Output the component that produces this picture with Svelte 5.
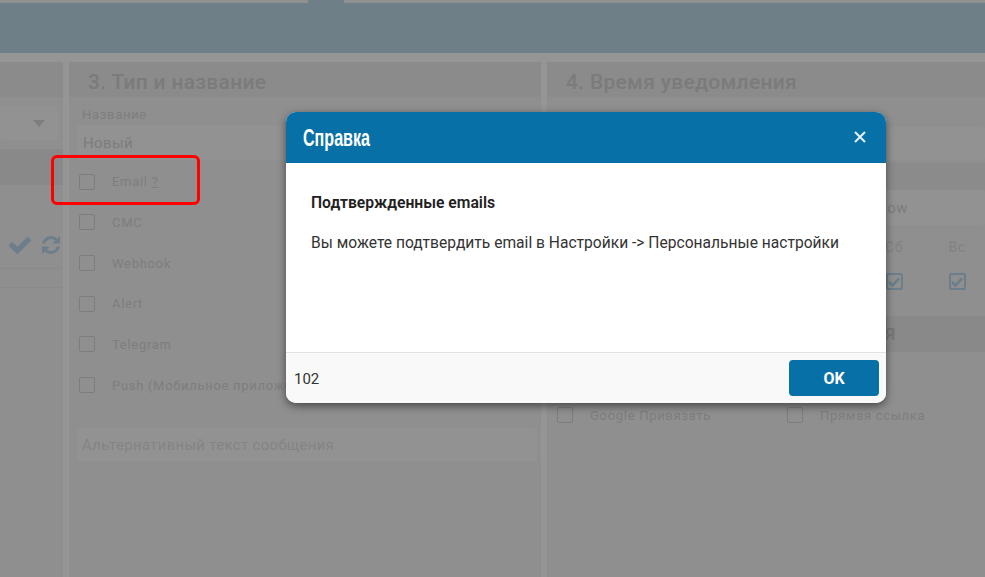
<script>
  const channels = ['Email', 'СМС', 'Webhook', 'Alert', 'Telegram', 'Push (Мобильное приложение)'];
</script>

<div class="page">
  <div class="topstrip"><span class="tab"></span></div>
  <div class="bluebar"></div>
  <div class="columns">
    <section class="col first">
      <div class="title"></div>
      <div class="select"><span class="caret"></span></div>
      <div class="band first-band"></div>
      <div class="actions">
        <svg width="22" height="18" viewBox="121 270 1550 1252"><path fill="#b2d2e4" d="M1671 566q0 40-28 68l-724 724-136 136q-28 28-68 28t-68-28l-136-136-362-362q-28-28-28-68t28-68l136-136q28-28 68-28t68 28l294 295 656-657q28-28 68-28t68 28l136 136q28 28 28 68z"/></svg>
        <svg width="18" height="18" viewBox="128 128 1536 1536"><path fill="#b2d2e4" d="M1639 1056q0 5-1 7-64 268-268 434.500t-478 166.500q-146 0-282.500-55t-243.500-157l-129 129q-19 19-45 19t-45-19-19-45v-448q0-26 19-45t45-19h448q26 0 45 19t19 45-19 45l-137 137q71 66 161 102t187 36q134 0 250-65t186-179q11-17 53-117 8-23 30-23h192q13 0 22.500 9.500t9.500 22.500zm25-800v448q0 26-19 45t-45 19h-448q-26 0-45-19t-19-45 19-45l138-138q-148-137-349-137-134 0-250 65t-186 179q-11 17-53 117-8 23-30 23h-199q-13 0-22.500-9.500t-9.500-22.500v-7q65-268 270-434.500t480-166.500q146 0 284 55.500t245 156.500l130-129q19-19 45-19t45 19 19 45z"/></svg>
      </div>
      <div class="rule r1"></div>
      <div class="rule r2"></div>
    </section>

    <section class="col second">
      <h2 class="title">3. Тип и название</h2>
      <div class="field">
        <label class="lbl" for="n">Название</label>
        <div id="n" class="input">Новый</div>
      </div>
      <ul class="checks">
        {#each channels as c, i}
          <li><span class="box"></span><span class="chk-label">{c}{#if i === 0}&nbsp;<u>?</u>{/if}</span></li>
        {/each}
      </ul>
      <div class="input alt">Альтернативный текст сообщения</div>
    </section>

    <section class="col third">
      <h2 class="title">4. Время уведомления</h2>
      <div class="input t1"></div>
      <div class="band b2"></div>
      <div class="input tz">Europe/Moscow</div>
      <div class="days">
        <div class="day"><span>Сб</span><span class="box on"><svg width="12" height="10" viewBox="0 0 12 10"><path d="M1 5l3.500 3.500L11 1.500" fill="none" stroke="#b2d2e4" stroke-width="2.600"/></svg></span></div>
        <div class="day"><span>Вс</span><span class="box on"><svg width="12" height="10" viewBox="0 0 12 10"><path d="M1 5l3.500 3.500L11 1.500" fill="none" stroke="#b2d2e4" stroke-width="2.600"/></svg></span></div>
      </div>
      <div class="band b3">Я</div>
      <div class="links">
        <div class="link"><span class="box"></span><span class="chk-label">Google Привязать</span></div>
        <div class="link"><span class="box"></span><span class="chk-label">Прямая ссылка</span></div>
      </div>
    </section>
  </div>

  <div class="backdrop"></div>
  <div class="marker"></div>

  <div class="modal">
    <header class="m-head">
      <h1>Справка</h1>
      <svg class="close" width="12" height="12" viewBox="0 0 12 12"><path d="M1 1l10 10M11 1L1 11" stroke="#e6f1f7" stroke-width="2"/></svg>
    </header>
    <div class="m-body">
      <h3>Подтвержденные emails</h3>
      <p>Вы можете подтвердить email в Настройки -&gt; Персональные настройки</p>
    </div>
    <footer class="m-foot">
      <span class="num">102</span>
      <button type="button">OK</button>
    </footer>
  </div>
</div>

<style>
  :global(body) { margin: 0; background: #fff; }
  .page {
    position: relative;
    width: 985px;
    height: 577px;
    overflow: hidden;
    background: #f8f8f8;
    font-family: Roboto, "Liberation Sans", sans-serif;
    color: #d2d2d2;
  }
  .topstrip { height: 3px; background: #f0f0f0; display: flex; padding-left: 308px; }
  .tab { width: 36px; background: #b9d4e3; }
  .bluebar { height: 50px; background: #b9d4e3; }
  .columns {
    margin-top: 9px;
    height: 515px;
    display: grid;
    grid-template-columns: 63px 472px 1fr;
    gap: 6px;
  }
  .col { background: #eee; display: flex; flex-direction: column; min-width: 0; }
  .title {
    height: 35px;
    margin: 0;
    flex: none;
    background: #e8e8e8;
    font-size: 21px;
    font-weight: 500;
    line-height: 40px;
    letter-spacing: 0.3px;
    color: #cdcdcd;
  }
  .second .title { padding-left: 19px; }
  .third .title { padding-left: 19px; }
  .select {
    margin: 9px 5px 0 0;
    height: 34px;
    background: #f4f4f4;
    display: flex;
    justify-content: flex-end;
    align-items: center;
    padding-right: 13px;
    box-sizing: border-box;
    border-radius: 3px;
  }
  .caret { border: 6px solid transparent; border-top: 7px solid #d2d2d2; border-bottom: 0; }
  .first-band { margin-top: 9px; height: 36px; background: #e4e4e4; }
  .band { flex: none; }
  .actions { margin-top: 50px; height: 20px; display: flex; gap: 11px; padding-left: 9px; align-items: center; }
  .rule { height: 1px; background: #e6e6e6; }
  .r1 { margin-top: 13px; }
  .r2 { margin-top: 18px; }
  .field { padding: 10px 4px 0 13px; }
  .lbl { display: block; font-size: 13px; line-height: 16px; letter-spacing: 0.7px; color: #d2d2d2; }
  .input {
    background: #f4f4f4;
    border-radius: 3px;
    font-size: 15px;
    letter-spacing: 0.4px;
    color: #d0d0d0;
    box-sizing: border-box;
    padding-left: 6px;
  }
  .field .input { margin: 2px 0 0 -5px; height: 35px; line-height: 36px; }
  .checks { list-style: none; margin: 1.300px 0 0; padding: 0 0 0 10px; }
  .checks li { height: 40.700px; display: flex; align-items: center; white-space: nowrap; }
  .box {
    width: 14px;
    height: 14px;
    flex: none;
    border: 1px solid #d0d0d0;
    border-radius: 2px;
    display: flex;
    align-items: center;
    justify-content: center;
  }
  .box.on { border: 2px solid #b2d2e4; width: 13px; height: 13px; }
  .chk-label { margin-left: 17px; font-size: 13px; letter-spacing: 0.7px; color: #d2d2d2; }
  .alt { margin: 23px 4px 0 8px; height: 33px; line-height: 34px; font-size: 14.800px; padding-left: 5px; color: #dcdcdc; }
  .t1 { margin: 30px 0 0 6px; height: 33px; flex: none; }
  .b2 { margin-top: 3px; height: 27px; background: #e8e8e8; }
  .tz { height: 35px; margin-left: 6px; line-height: 36px; padding-left: 240px; flex: none; }
  .days { display: flex; justify-content: flex-end; gap: 45px; padding: 14px 19px 0 0; height: 91px; box-sizing: border-box; flex: none; }
  .day { display: flex; flex-direction: column; gap: 18px; align-items: center; font-size: 14px; letter-spacing: 0.5px; color: #d8d8d8; width: 18px; }
  .b3 { height: 36px; background: #e4e4e4; font-size: 17px; font-weight: 700; line-height: 36px; color: #c8c8c8; padding-left: 338px; }
  .links { display: flex; padding: 54px 0 0 10px; }
  .link { display: flex; align-items: center; width: 230px; height: 18px; flex: none; }

  .backdrop { position: absolute; inset: 0; background: rgba(0, 0, 0, 0.4); }
  .marker {
    position: absolute;
    left: 51px;
    top: 155px;
    width: 149px;
    height: 50px;
    box-sizing: border-box;
    border: 3px solid #f00;
    border-radius: 6px;
  }
  .modal {
    position: absolute;
    left: 286px;
    top: 112px;
    width: 600px;
    height: 291px;
    border-radius: 10px;
    overflow: hidden;
    background: #fff;
    box-shadow: 0 3px 9px rgba(0, 0, 0, 0.5);
    display: flex;
    flex-direction: column;
    color: #222;
  }
  .m-head {
    height: 51px;
    flex: none;
    background: #0770a6;
    display: flex;
    align-items: center;
    justify-content: space-between;
    padding: 0 20px 0 17px;
    box-sizing: border-box;
  }
  .m-head h1 {
    margin: 0;
    font-family: "Liberation Sans", sans-serif;
    font-size: 24px;
    font-weight: 700;
    color: #fff;
    transform: scaleX(0.67);
    transform-origin: left center;
  }
  .close { margin-top: -2px; }
  .m-body { flex: 1; padding: 31px 25px 0; font-size: 15.600px; }
  .m-body h3 { margin: 0; font-size: 15.700px; line-height: 18px; font-weight: 600; color: #212121; }
  .m-body p { margin: 22px 0 0; line-height: 18px; color: #333; white-space: nowrap; }
  .m-foot {
    height: 51px;
    flex: none;
    border-top: 1px solid #e2e2e2;
    background: #f9f9f9;
    box-sizing: border-box;
    display: flex;
    align-items: center;
    justify-content: space-between;
    padding: 2px 7px 0 8px;
    font-size: 15px;
    color: #333;
  }
  .m-foot button {
    width: 90px;
    height: 36px;
    margin-top: -2px;
    border: 0;
    border-radius: 4px;
    background: #0770a6;
    color: #fff;
    font: 700 16px Roboto, sans-serif;
  }
</style>
